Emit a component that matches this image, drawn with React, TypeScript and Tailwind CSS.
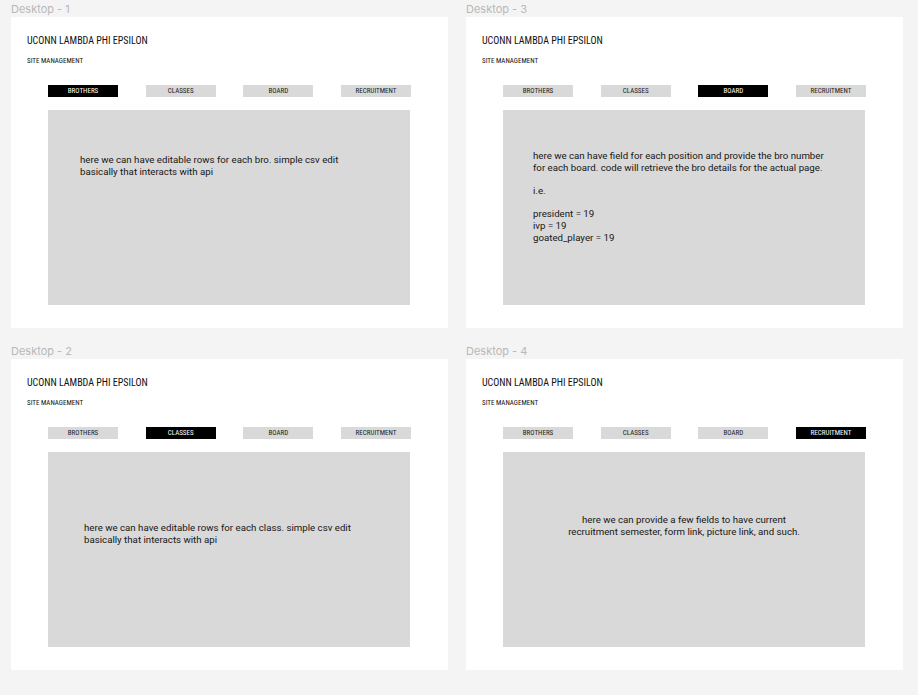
const TABS = ["BROTHERS", "CLASSES", "BOARD", "RECRUITMENT"];

type Frame = {
  label: string;
  active: number;
  body: React.ReactNode;
};

const FRAMES: Frame[] = [
  {
    label: "Desktop - 1",
    active: 0,
    body: (
      <p className="pl-[32px] pt-[44px]">
        here we can have editable rows for each bro. simple csv edit
        <br />
        basically that interacts with api
      </p>
    ),
  },
  {
    label: "Desktop - 3",
    active: 2,
    body: (
      <div className="pl-[30px] pt-[40px]">
        <p>
          here we can have field for each position and provide the bro number
          <br />
          for each board. code will retrieve the bro details for the actual page.
        </p>
        <p className="mt-[11.7px]">i.e.</p>
        <p className="mt-[11.7px]">
          president = 19
          <br />
          ivp = 19
          <br />
          goated_player = 19
        </p>
      </div>
    ),
  },
  {
    label: "Desktop - 2",
    active: 1,
    body: (
      <p className="pl-[36px] pt-[70px]">
        here we can have editable rows for each class. simple csv edit
        <br />
        basically that interacts with api
      </p>
    ),
  },
  {
    label: "Desktop - 4",
    active: 3,
    body: (
      <p className="pt-[62px] text-center">
        here we can provide a few fields to have current
        <br />
        recruitment semester, form link, picture link, and such.
      </p>
    ),
  },
];

const condensed =
  "font-['Roboto_Condensed','Liberation_Sans_Narrow','DejaVu_Sans_Condensed',Roboto,sans-serif]";

function Mockup({ frame }: { frame: Frame }) {
  return (
    <div className="flex flex-col">
      <div className="h-[17px] pt-[3px] text-[11px] leading-[13px] text-[#b8b8b8] font-['Inter',sans-serif]">
        {frame.label}
      </div>
      <div className="h-[311px] bg-white pl-[16px] pt-[18px]">
        <div className={`${condensed} text-[10px] leading-[12px] text-[#111]`}>
          UCONN LAMBDA PHI EPSILON
        </div>
        <div className={`${condensed} mt-[10px] text-[7px] leading-[9px] text-[#111]`}>
          SITE MANAGEMENT
        </div>
        <div className="ml-[21px] mt-[19px] w-[363px]">
          <div className="flex justify-between">
            {TABS.map((t, i) => (
              <div
                key={t}
                className={`${condensed} flex h-[12px] w-[70px] items-center justify-center text-[7px] font-normal ${
                  i === frame.active ? "bg-black text-white" : "bg-[#d9d9d9] text-[#222]"
                }`}
              >
                {t}
              </div>
            ))}
          </div>
          <div className="mt-[13px] h-[195px] w-[362px] bg-[#d9d9d9] font-['Roboto',sans-serif] text-[9.7px] leading-[11.7px] text-[#161616]">
            {frame.body}
          </div>
        </div>
      </div>
    </div>
  );
}

export default function App() {
  return (
    <div className="min-h-[695px] w-full bg-[#f4f4f4] pl-[11px]">
      <div className="grid grid-cols-[437px_437px] gap-x-[18px] gap-y-[14px]">
        {FRAMES.map((f) => (
          <Mockup key={f.label} frame={f} />
        ))}
      </div>
    </div>
  );
}
